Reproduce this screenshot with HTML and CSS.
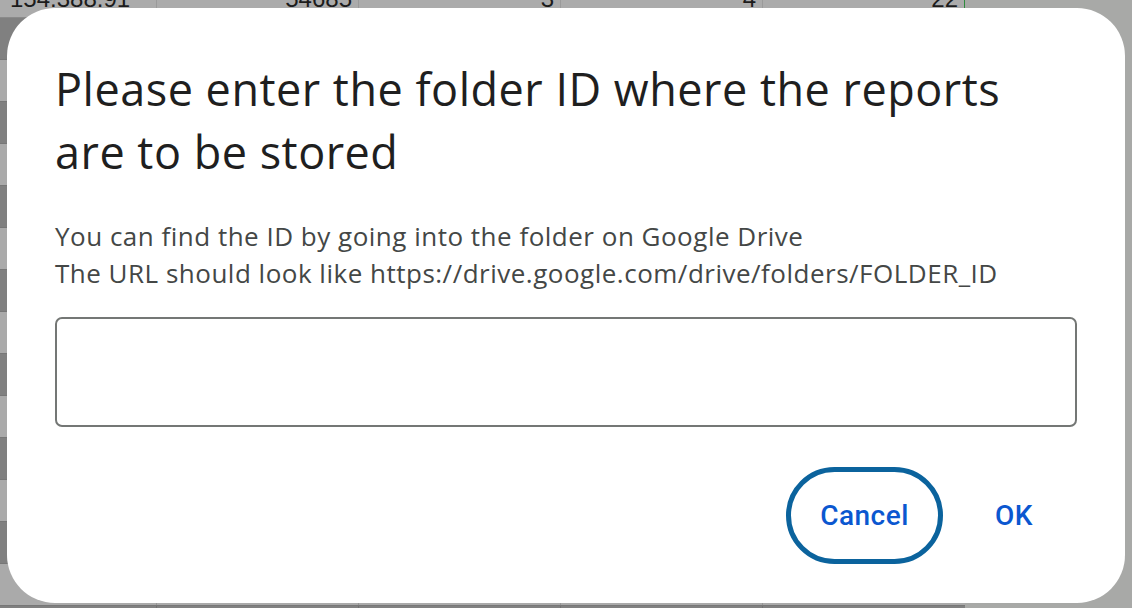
FILE: index.html
```html
<!DOCTYPE html>
<html>
<head>
<meta charset="utf-8">
<link rel="stylesheet" href="styles.css">
</head>
<body>
<div class="page">
  <div class="sheet">
    <div class="row top">
      <div class="cell c1">154.388.91</div>
      <div class="cell">54685</div>
      <div class="cell">3</div>
      <div class="cell">4</div>
      <div class="cell last">22</div>
    </div>
    <div class="row dark"></div>
    <div class="row light"></div>
    <div class="row dark"></div>
    <div class="row light"></div>
    <div class="row dark"></div>
    <div class="row light"></div>
    <div class="row dark"></div>
    <div class="row light"></div>
    <div class="row dark"></div>
    <div class="row light"></div>
    <div class="row dark"></div>
    <div class="row light"></div>
    <div class="row dark"></div>
    <div class="row light"></div>
    <div class="row dark"></div>
  </div>

  <div class="dialog">
    <h1 class="title">Please enter the folder ID where the reports are to be stored</h1>
    <p class="desc">You can find the ID by going into the folder on Google Drive<br>The URL should look like https://drive.google.com/drive/folders/FOLDER_ID</p>
    <div class="input"></div>
    <div class="actions">
      <button class="btn cancel">Cancel</button>
      <button class="btn ok">OK</button>
    </div>
  </div>
</div>
</body>
</html>
```

FILE: styles.css
```css
html, body {
  margin: 0;
  padding: 0;
}
body {
  width: 1132px;
  height: 608px;
  overflow: hidden;
  background: #a8a9a7;
  font-family: "Liberation Sans", Arial, sans-serif;
}
.page {
  position: relative;
  width: 1132px;
  height: 608px;
  overflow: hidden;
}
.sheet {
  width: 965px;
  display: flex;
  flex-direction: column;
}
.row {
  height: 42px;
  box-sizing: border-box;
  border-bottom: 1px solid #777;
  background-image: linear-gradient(to right, transparent 156px, rgba(0,0,0,0.12) 156px, rgba(0,0,0,0.12) 157px, transparent 157px,
    transparent 358px, rgba(0,0,0,0.12) 358px, rgba(0,0,0,0.12) 359px, transparent 359px,
    transparent 560px, rgba(0,0,0,0.12) 560px, rgba(0,0,0,0.12) 561px, transparent 561px,
    transparent 762px, rgba(0,0,0,0.12) 762px, rgba(0,0,0,0.12) 763px, transparent 763px);
}
.row.dark { background-color: #808080; }
.row.light { background-color: #aaaaaa; }
.row.top {
  height: 18px;
  display: flex;
  background: #ababab;
  border-bottom: 1px solid #8a8a8a;
  overflow: hidden;
}
.cell {
  width: 202px;
  box-sizing: border-box;
  border-right: 1px solid #9a9a9a;
  text-align: right;
  padding-right: 6px;
  font-size: 24px;
  line-height: 24px;
  margin-top: -13px;
  color: #1c1c1c;
  height: 32px;
}
.cell.c1 {
  width: 157px;
  text-align: left;
  padding-left: 10px;
}
.cell.last {
  border-right: 1px solid #2e8b3d;
}

.dialog {
  position: absolute;
  left: 7px;
  top: 8px;
  width: 1118px;
  height: 595px;
  box-sizing: border-box;
  background: #ffffff;
  border-radius: 48px;
  padding: 49px 48px 0 48px;
  display: flex;
  flex-direction: column;
}
.title {
  margin: 0;
  font-family: "Open Sans", "Noto Sans", sans-serif;
  font-weight: 400;
  font-size: 45px;
  line-height: 63px;
  color: #1f1f1f;
  letter-spacing: 0.5px;
  width: 980px;
}
.desc {
  margin: 35px 0 0 0;
  font-family: "Open Sans", "Noto Sans", sans-serif;
  font-size: 26px;
  line-height: 37px;
  letter-spacing: 0.5px;
  color: #444746;
}
.input {
  margin-top: 25px;
  height: 110px;
  width: 1022px;
  box-sizing: border-box;
  border: 2px solid #747775;
  border-radius: 7px;
}
.actions {
  margin-top: 40px;
  display: flex;
  justify-content: flex-end;
  align-items: center;
  gap: 31px;
  padding-right: 23px;
}
.btn {
  background: transparent;
  border: none;
  font-family: "Roboto", "Noto Sans", sans-serif;
  font-weight: 500;
  font-size: 28px;
  letter-spacing: 0.5px;
  color: #0b57d0;
  cursor: pointer;
  padding: 0;
}
.cancel {
  width: 157px;
  height: 97px;
  border: 5px solid #0b639d;
  border-radius: 49px;
}
.ok {
  height: 97px;
  width: 80px;
}
```
